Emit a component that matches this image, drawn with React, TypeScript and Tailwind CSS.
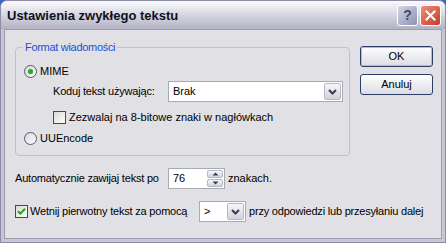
import React from "react";

function Radio({ checked }: { checked?: boolean }) {
  return (
    <span className="w-[13px] h-[13px] shrink-0 rounded-full border border-[#4e5d70] bg-gradient-to-br from-[#d6d6de] to-white flex items-center justify-center">
      {checked && <span className="w-[5px] h-[5px] rounded-full bg-[#2ea62e] shadow-[0_0_1px_#7fdc7f]" />}
    </span>
  );
}

function Check({ checked }: { checked?: boolean }) {
  return (
    <span className="w-[13px] h-[13px] shrink-0 border border-[#29507c] bg-gradient-to-br from-[#d8d8d4] to-white flex items-center justify-center">
      {checked && (
        <svg width="9" height="9" viewBox="0 0 9 9">
          <path d="M1 4.2 L3.4 6.6 L8 1.8" stroke="#21a121" strokeWidth="2" fill="none" />
        </svg>
      )}
    </span>
  );
}

function Chevron() {
  return (
    <svg width="9" height="6" viewBox="0 0 9 6">
      <path d="M1 1 L4.5 4.5 L8 1" stroke="#3c3c4c" strokeWidth="2" fill="none" />
    </svg>
  );
}

function ArrowBtn() {
  return (
    <span className="w-[17px] h-[17px] shrink-0 border border-[#b4b8c8] rounded-[2px] bg-gradient-to-b from-[#f6f6fa] to-[#d2d2dc] flex items-center justify-center">
      <Chevron />
    </span>
  );
}

function Button({ children, def }: { children: React.ReactNode; def?: boolean }) {
  return (
    <div className="w-[73px] h-[21px] rounded-[3px] border border-[#2c3e64] bg-gradient-to-b from-white to-[#dcdce4] flex items-center justify-center text-black">
      <div
        className={
          "w-full h-full rounded-[2px] flex items-center justify-center " +
          (def ? "border border-[#a8bce4]" : "")
        }
      >
        {children}
      </div>
    </div>
  );
}

export default function App() {
  return (
    <div className="w-[446px] h-[243px] bg-[#3a66c4] font-['Liberation_Sans',Arial,sans-serif] text-[11px] text-black leading-[13px]">
      <div className="w-full h-full rounded-t-[7px] bg-[#c6c6d4] border border-[#8c8ca4] flex flex-col overflow-hidden">
        {/* title bar */}
        <div className="h-[28px] shrink-0 flex items-center pl-[6px] pr-[4px] bg-gradient-to-b from-[#fbfbfd] via-[#d6d6e0] to-[#b2b2c4]">
          <span className="text-[13px] font-bold text-[#10101a] flex-1">Ustawienia zwykłego tekstu</span>
          <div className="flex gap-[2px]">
            <div className="w-[21px] h-[21px] rounded-[3px] border border-white bg-gradient-to-br from-[#d4d6e6] to-[#8e92b4] flex items-center justify-center text-[14px] font-bold text-[#4a4a5e]">
              ?
            </div>
            <div className="w-[21px] h-[21px] rounded-[3px] border border-white bg-gradient-to-br from-[#ee8c78] to-[#c43c24] flex items-center justify-center">
              <svg width="11" height="11" viewBox="0 0 11 11">
                <path d="M1.5 1.5 L9.5 9.5 M9.5 1.5 L1.5 9.5" stroke="white" strokeWidth="2" strokeLinecap="square" />
              </svg>
            </div>
          </div>
        </div>
        {/* client */}
        <div className="flex-1 px-[3px] pb-[3px]">
          <div className="w-full h-full bg-[#e1e0e5] border border-[#9c9cb0] flex pl-[10px]">
            {/* left column */}
            <div className="w-[335px] pt-[17px] flex flex-col">
              <div className="relative h-[109px] border border-[#c0c0c8] rounded-[4px] flex flex-col pl-[8px] pt-[16px]">
                <span className="absolute -top-[7px] left-[7px] px-[2px] bg-[#e1e0e5] text-[#1c4fd4] tracking-[-0.3px] whitespace-nowrap">
                  Format wiadomości
                </span>
                <div className="h-[14px] flex items-center gap-[3px]">
                  <Radio checked />
                  <span>MIME</span>
                </div>
                <div className="h-[21px] mt-[3px] flex items-center pl-[29px]">
                  <span className="w-[115px] whitespace-nowrap tracking-[-0.2px]">Koduj tekst używając:</span>
                  <div className="w-[175px] h-[21px] border border-[#a5acb2] bg-white flex items-center justify-between pl-[4px] pr-[1px]">
                    <span>Brak</span>
                    <ArrowBtn />
                  </div>
                </div>
                <div className="h-[14px] mt-[8px] flex items-center gap-[3px] pl-[29px]">
                  <Check />
                  <span className="whitespace-nowrap">Zezwalaj na 8-bitowe znaki w nagłówkach</span>
                </div>
                <div className="h-[14px] mt-[7px] flex items-center gap-[3px]">
                  <Radio />
                  <span>UUEncode</span>
                </div>
              </div>
              <div className="h-[21px] mt-[12px] flex items-center">
                <span className="w-[153px] shrink-0 whitespace-nowrap tracking-[-0.2px]">Automatycznie zawijaj tekst po</span>
                <div className="w-[57px] h-[21px] shrink-0 border border-[#a5acb2] bg-white flex items-center justify-between pl-[4px] pr-[1px]">
                  <span>76</span>
                  <div className="flex flex-col gap-[1px]">
                    <span className="w-[16px] h-[8px] border border-[#b4b8c8] rounded-[2px] bg-gradient-to-b from-[#f6f6fa] to-[#d2d2dc] flex items-center justify-center">
                      <svg width="7" height="4" viewBox="0 0 7 4">
                        <path d="M0.5 3.5 L3.5 0.5 L6.5 3.5 Z" fill="#3c3c4c" />
                      </svg>
                    </span>
                    <span className="w-[16px] h-[8px] border border-[#b4b8c8] rounded-[2px] bg-gradient-to-b from-[#f6f6fa] to-[#d2d2dc] flex items-center justify-center">
                      <svg width="7" height="4" viewBox="0 0 7 4">
                        <path d="M0.5 0.5 L3.5 3.5 L6.5 0.5 Z" fill="#3c3c4c" />
                      </svg>
                    </span>
                  </div>
                </div>
                <span className="ml-[3px] whitespace-nowrap">znakach.</span>
              </div>
              <div className="h-[21px] mt-[12px] flex items-center">
                <div className="w-[184px] shrink-0 flex items-center gap-[2px]">
                  <Check checked />
                  <span className="whitespace-nowrap tracking-[-0.2px]">Wetnij pierwotny tekst za pomocą</span>
                </div>
                <div className="w-[47px] h-[21px] shrink-0 border border-[#a5acb2] bg-white flex items-center justify-between pl-[4px] pr-[1px]">
                  <span>&gt;</span>
                  <ArrowBtn />
                </div>
                <span className="ml-[3px] whitespace-nowrap tracking-[-0.2px]">przy odpowiedzi lub przesyłaniu dalej</span>
              </div>
            </div>
            {/* right column */}
            <div className="pt-[16px] pl-[10px] flex flex-col gap-[7px]">
              <Button def>OK</Button>
              <Button>Anuluj</Button>
            </div>
          </div>
        </div>
      </div>
    </div>
  );
}
